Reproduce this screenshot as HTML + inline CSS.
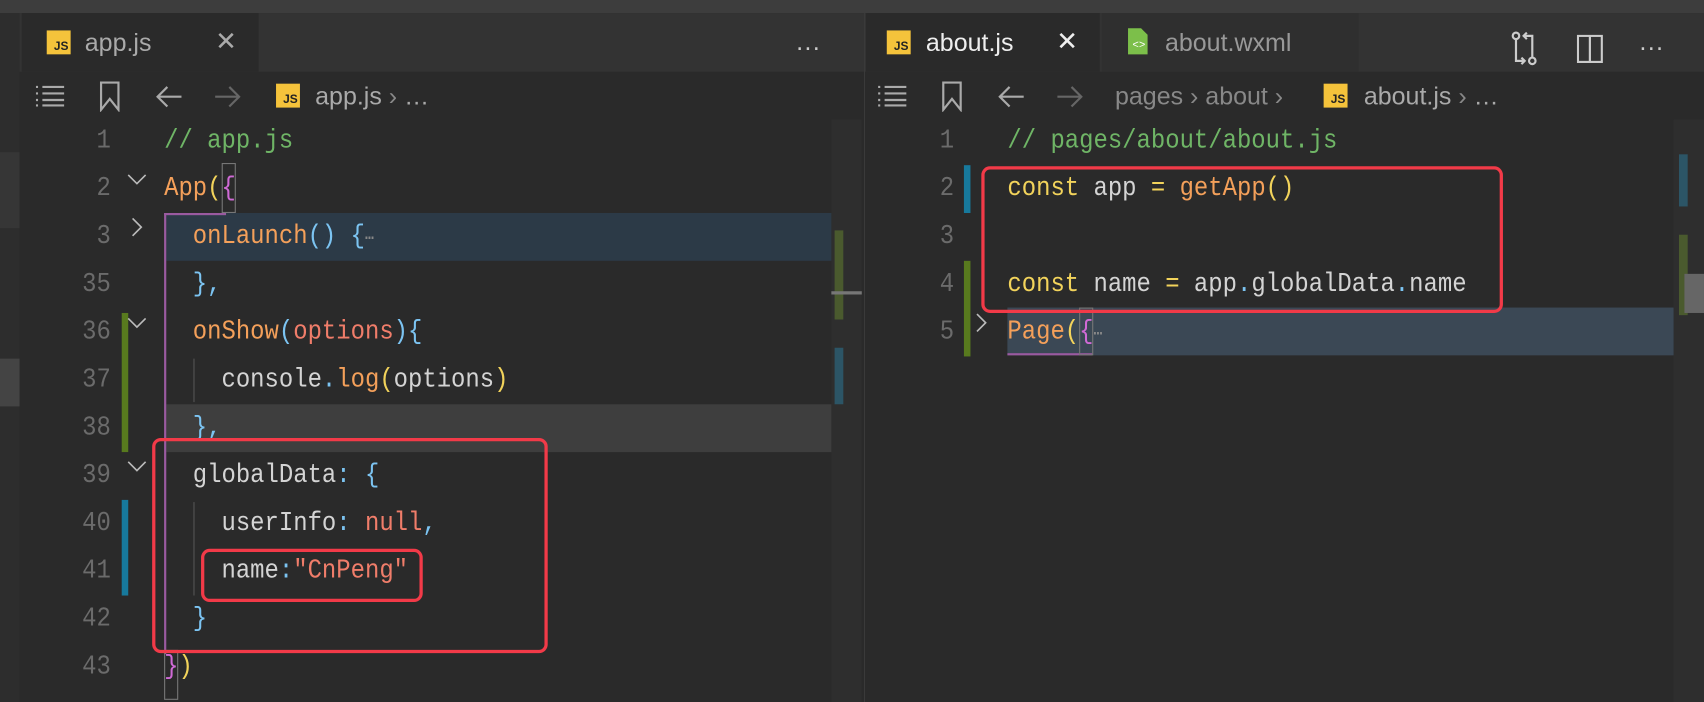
<!DOCTYPE html>
<html><head><meta charset="utf-8"><style>
*{margin:0;padding:0;box-sizing:border-box}
html,body{width:1704px;height:702px;overflow:hidden;background:#2a2a2a}
#s{position:absolute;left:0;top:0;width:1568px;height:646px;transform:scale(1.08673);transform-origin:0 0;background:#2a2a2a;font-family:"Liberation Sans",sans-serif}
.a{position:absolute}
.code{position:absolute;font-family:"Liberation Mono",monospace;font-size:22px;line-height:44px;height:44px;white-space:pre;color:#d4d4d4;transform:scaleY(1.12);transform-origin:0 50%}
.ln{position:absolute;font-family:"Liberation Mono",monospace;font-size:22px;line-height:44px;color:#6b6b6b;text-align:right;width:40px;transform:scaleY(1.12)}
.c{color:#6fb566}.f{color:#f4a05a}.p{color:#7cc4f2}.y{color:#f2d35b}.r{color:#f07d6a}.m{color:#d06ad6}
.js{position:absolute;width:22px;height:22px;background:#f5c33b;color:#222;font:bold 11px "Liberation Sans",sans-serif;display:flex;align-items:flex-end;justify-content:flex-end;padding:0 2px 1px 0}
.tab{position:absolute;font-size:23px;line-height:54px}
.red{position:absolute;border:3px solid #f23a48;border-radius:8px}
</style></head><body><div id="s">
<div class="a" style="left:0;top:0;width:1568px;height:12px;background:#3d3d3d"></div>
<div class="a" style="left:0;top:12px;width:1568px;height:54px;background:#333"></div>
<div class="a" style="left:0;top:12px;width:18px;height:634px;background:#2d2d2d"></div>
<div class="a" style="left:0;top:140px;width:18px;height:70px;background:#363636"></div>
<div class="a" style="left:0;top:330px;width:18px;height:44px;background:#444"></div>
<div class="a" style="left:20px;top:12px;width:218px;height:54px;background:#2a2a2a"></div>
<div class="js" style="left:43px;top:28px">JS</div>
<div class="tab" style="left:78px;top:12px;color:#aaa">app.js</div>
<div class="tab" style="left:198px;top:12px;color:#aaa;font-size:24px">✕</div>
<div class="tab" style="left:732px;top:16px;color:#ccc">···</div>
<div class="a" style="left:795px;top:12px;width:1px;height:634px;background:#3a3a3a"></div>
<div class="a" style="left:797px;top:12px;width:215px;height:54px;background:#2a2a2a"></div>
<div class="js" style="left:816px;top:28px">JS</div>
<div class="tab" style="left:852px;top:12px;color:#eee">about.js</div>
<div class="tab" style="left:972px;top:12px;color:#eee;font-size:24px">✕</div>
<div class="a" style="left:1014px;top:12px;width:236px;height:54px;background:#2f2f2f"></div>
<svg class="a" style="left:1036px;top:24px" width="22" height="28"><path d="M2 2h12l6 6v18H2z" fill="#7cbf4a"/><text x="6" y="20" font-size="10" fill="#fff" font-family="Liberation Mono">&lt;&gt;</text></svg>
<div class="tab" style="left:1072px;top:12px;color:#999">about.wxml</div>
<svg class="a" style="left:1390px;top:28px" width="30" height="34" fill="none" stroke="#ccc" stroke-width="2"><circle cx="5" cy="5" r="3"/><circle cx="20" cy="28" r="3"/><path d="M5 8v20h8M20 25V5h-8M15 2l-3 3 3 3M10 25l3 3-3 3"/></svg>
<svg class="a" style="left:1451px;top:32px" width="24" height="26" fill="none" stroke="#ccc" stroke-width="2"><rect x="1" y="1" width="22" height="24"/><path d="M12 1v24"/></svg>
<div class="tab" style="left:1508px;top:16px;color:#ccc">···</div>
<svg class="a" style="left:33px;top:78px" width="28" height="20" stroke="#aaa" stroke-width="2"><path d="M0 2h2M6 2h20M0 8h2M6 8h20M0 14h2M6 14h20M0 19h2M6 19h20"/></svg>
<svg class="a" style="left:91px;top:75px" width="20" height="28" fill="none" stroke="#aaa" stroke-width="2"><path d="M2 1h16v25l-8-10-8 10z"/></svg>
<svg class="a" style="left:143px;top:78px" width="26" height="22" fill="none" stroke="#aaa" stroke-width="2"><path d="M24 11H3M11 2l-9 9 9 9"/></svg>
<svg class="a" style="left:196px;top:78px" width="26" height="22" fill="none" stroke="#666" stroke-width="2"><path d="M2 11h21M15 2l9 9-9 9"/></svg>
<div class="js" style="left:254px;top:77px">JS</div>
<div class="a" style="left:290px;top:75px;font-size:23px;color:#aaa">app.js <span style="color:#888">›</span> …</div>
<svg class="a" style="left:808px;top:78px" width="28" height="20" stroke="#aaa" stroke-width="2"><path d="M0 2h2M6 2h20M0 8h2M6 8h20M0 14h2M6 14h20M0 19h2M6 19h20"/></svg>
<svg class="a" style="left:866px;top:75px" width="20" height="28" fill="none" stroke="#aaa" stroke-width="2"><path d="M2 1h16v25l-8-10-8 10z"/></svg>
<svg class="a" style="left:918px;top:78px" width="26" height="22" fill="none" stroke="#aaa" stroke-width="2"><path d="M24 11H3M11 2l-9 9 9 9"/></svg>
<svg class="a" style="left:971px;top:78px" width="26" height="22" fill="none" stroke="#666" stroke-width="2"><path d="M2 11h21M15 2l9 9-9 9"/></svg>
<div class="a" style="left:1026px;top:75px;font-size:23px;color:#888">pages › about ›</div>
<div class="js" style="left:1218px;top:77px">JS</div>
<div class="a" style="left:1255px;top:75px;font-size:23px;color:#aaa">about.js <span style="color:#888">›</span> …</div>
<div class="a" style="left:765px;top:110px;width:28px;height:536px;background:#2e2e2e"></div>
<div class="a" style="left:768px;top:212px;width:8px;height:82px;background:#4a5a2e"></div>
<div class="a" style="left:768px;top:320px;width:8px;height:52px;background:#2c5566"></div>
<div class="a" style="left:765px;top:268px;width:28px;height:3px;background:#777"></div>
<div class="a" style="left:1540px;top:110px;width:28px;height:536px;background:#2e2e2e"></div>
<div class="a" style="left:1545px;top:142px;width:8px;height:48px;background:#2c5566"></div>
<div class="a" style="left:1545px;top:216px;width:8px;height:74px;background:#4a5a2e"></div>
<div class="a" style="left:1550px;top:252px;width:18px;height:36px;background:#666"></div>
<div class="a" style="left:153px;top:196px;width:612px;height:44px;background:#2c3a47"></div>
<div class="a" style="left:153px;top:372px;width:612px;height:44px;background:#3e3e3e"></div>
<div class="a" style="left:151px;top:196px;width:2px;height:406px;background:#9a5aa0"></div>
<div class="a" style="left:151px;top:196px;width:57px;height:2px;background:#9a5aa0"></div>
<div class="a" style="left:204px;top:150px;width:13px;height:46px;border:1px solid #777"></div>
<div class="a" style="left:151px;top:598px;width:13px;height:46px;border:1px solid #777"></div>
<div class="a" style="left:178px;top:330px;width:1px;height:40px;background:#555"></div>
<div class="a" style="left:178px;top:462px;width:1px;height:86px;background:#555"></div>
<div class="a" style="left:112px;top:288px;width:6px;height:128px;background:#587a1e"></div>
<div class="a" style="left:112px;top:460px;width:6px;height:88px;background:#17799c"></div>
<div class="ln" style="left:62px;top:108px">1</div>
<div class="ln" style="left:62px;top:152px">2</div>
<div class="ln" style="left:62px;top:196px">3</div>
<div class="ln" style="left:62px;top:240px">35</div>
<div class="ln" style="left:62px;top:284px">36</div>
<div class="ln" style="left:62px;top:328px">37</div>
<div class="ln" style="left:62px;top:372px">38</div>
<div class="ln" style="left:62px;top:416px">39</div>
<div class="ln" style="left:62px;top:460px">40</div>
<div class="ln" style="left:62px;top:504px">41</div>
<div class="ln" style="left:62px;top:548px">42</div>
<div class="ln" style="left:62px;top:592px">43</div>
<svg class="a" style="left:117px;top:160px" width="18" height="12" fill="none" stroke="#bbb" stroke-width="1.5"><path d="M1 1l8 8 8-8"/></svg>
<svg class="a" style="left:121px;top:200px" width="12" height="18" fill="none" stroke="#bbb" stroke-width="1.5"><path d="M1 1l8 8-8 8"/></svg>
<svg class="a" style="left:117px;top:292px" width="18" height="12" fill="none" stroke="#bbb" stroke-width="1.5"><path d="M1 1l8 8 8-8"/></svg>
<svg class="a" style="left:117px;top:424px" width="18" height="12" fill="none" stroke="#bbb" stroke-width="1.5"><path d="M1 1l8 8 8-8"/></svg>
<div class="code" style="left:151px;top:108px"><span class="c">// app.js</span></div>
<div class="code" style="left:151px;top:152px"><span class="f">App</span><span class="y">(</span><span class="m">{</span></div>
<div class="code" style="left:151px;top:196px">  <span class="f">onLaunch</span><span class="p">() {</span><span style="color:#888;font-size:14px">⋯</span></div>
<div class="code" style="left:151px;top:240px">  <span class="p">},</span></div>
<div class="code" style="left:151px;top:284px">  <span class="f">onShow</span><span class="p">(</span><span class="r">options</span><span class="p">){</span></div>
<div class="code" style="left:151px;top:328px">    console<span class="p">.</span><span class="f">log</span><span class="y">(</span>options<span class="y">)</span></div>
<div class="code" style="left:151px;top:372px">  <span class="p">},</span></div>
<div class="code" style="left:151px;top:416px">  globalData<span class="p">: {</span></div>
<div class="code" style="left:151px;top:460px">    userInfo<span class="p">:</span> <span class="r">null</span><span class="p">,</span></div>
<div class="code" style="left:151px;top:504px">    name<span class="p">:</span><span class="r">"CnPeng"</span></div>
<div class="code" style="left:151px;top:548px">  <span class="p">}</span></div>
<div class="code" style="left:151px;top:592px"><span class="m">}</span><span class="y">)</span></div>
<div class="red" style="left:140px;top:403px;width:364px;height:198px"></div>
<div class="red" style="left:185px;top:505px;width:204px;height:49px"></div>
<div class="a" style="left:927px;top:283px;width:613px;height:44px;background:#3b4855"></div>
<div class="a" style="left:927px;top:325px;width:78px;height:2px;background:#9a5aa0"></div>
<div class="a" style="left:993px;top:283px;width:13px;height:44px;border:1px solid #777"></div>
<div class="a" style="left:887px;top:152px;width:6px;height:44px;background:#17799c"></div>
<div class="a" style="left:887px;top:240px;width:6px;height:88px;background:#587a1e"></div>
<div class="ln" style="left:838px;top:108px">1</div>
<div class="ln" style="left:838px;top:152px">2</div>
<div class="ln" style="left:838px;top:196px">3</div>
<div class="ln" style="left:838px;top:240px">4</div>
<div class="ln" style="left:838px;top:284px">5</div>
<svg class="a" style="left:898px;top:288px" width="12" height="18" fill="none" stroke="#bbb" stroke-width="1.5"><path d="M1 1l8 8-8 8"/></svg>
<div class="code" style="left:927px;top:108px"><span class="c">// pages/about/about.js</span></div>
<div class="code" style="left:927px;top:152px"><span class="y">const</span> app <span class="y">=</span> <span class="f">getApp</span><span class="y">()</span></div>
<div class="code" style="left:927px;top:240px"><span class="y">const</span> name <span class="y">=</span> app<span class="p">.</span>globalData<span class="p">.</span>name</div>
<div class="code" style="left:927px;top:284px"><span class="f">Page</span><span class="y">(</span><span class="m">{</span><span style="color:#888;font-size:14px">⋯</span></div>
<div class="red" style="left:903px;top:153px;width:480px;height:135px"></div>
</div></body></html>
